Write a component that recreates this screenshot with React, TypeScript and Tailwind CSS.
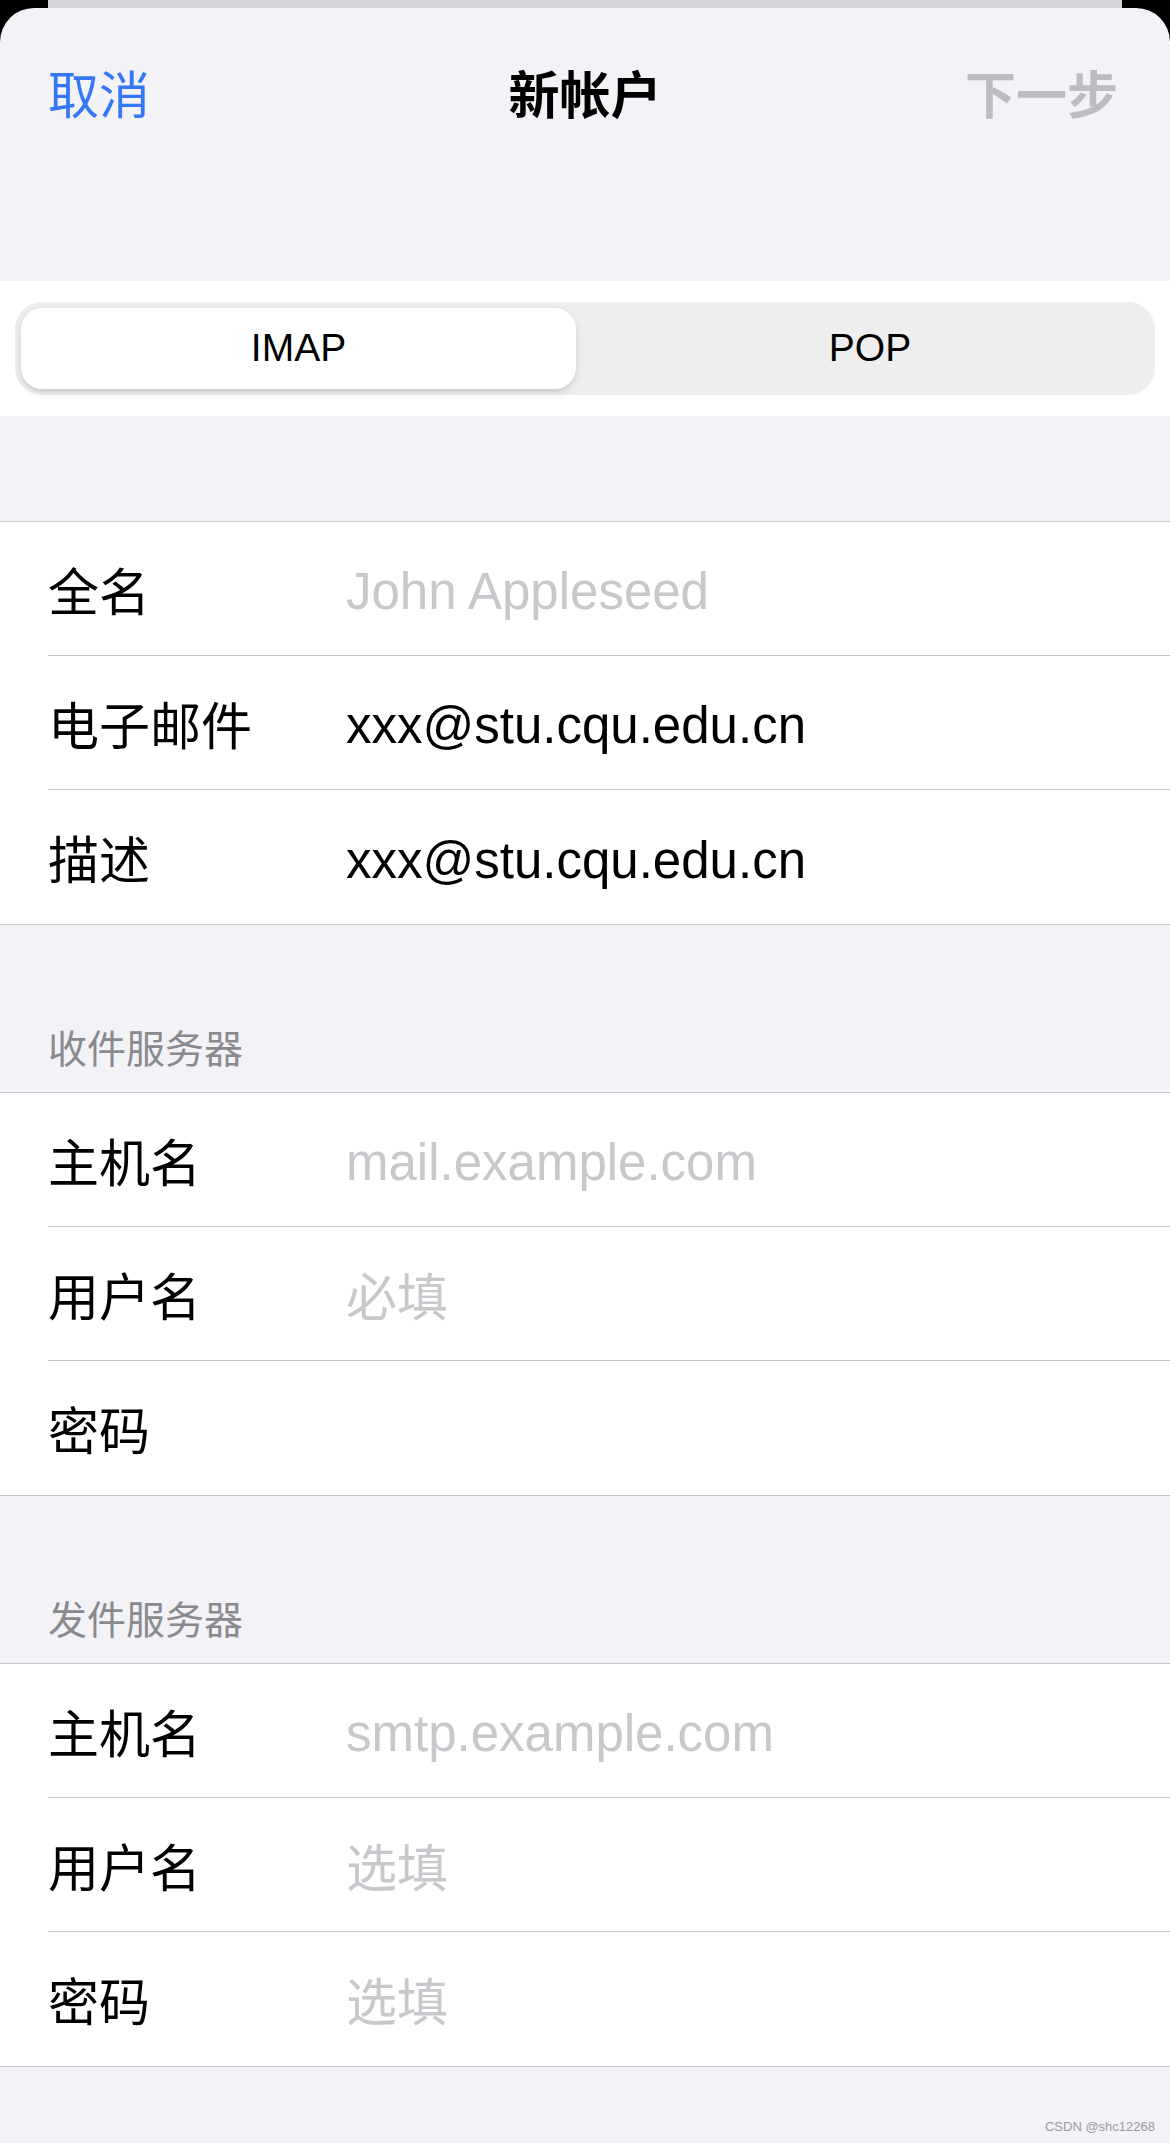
const cjk = "font-['Noto_Sans_CJK_SC',sans-serif]";
const latin = "font-['Liberation_Sans','Noto_Sans_CJK_SC',sans-serif]";

type Row = { label: string; value?: string; placeholder?: boolean; latinValue?: boolean };

const account: Row[] = [
  { label: '全名', value: 'John Appleseed', placeholder: true, latinValue: true },
  { label: '电子邮件', value: 'xxx@stu.cqu.edu.cn', latinValue: true },
  { label: '描述', value: 'xxx@stu.cqu.edu.cn', latinValue: true },
];

const incoming: Row[] = [
  { label: '主机名', value: 'mail.example.com', placeholder: true, latinValue: true },
  { label: '用户名', value: '必填', placeholder: true },
  { label: '密码' },
];

const outgoing: Row[] = [
  { label: '主机名', value: 'smtp.example.com', placeholder: true, latinValue: true },
  { label: '用户名', value: '选填', placeholder: true },
  { label: '密码', value: '选填', placeholder: true },
];

function Group({ rows }: { rows: Row[] }) {
  return (
    <div className="bg-white border-y border-[#c8c7cc]">
      {rows.map((row, i) => (
        <div key={i} className="pl-[48px]">
          <div className={`h-[134px] flex items-center ${i < rows.length - 1 ? 'border-b border-[#c8c7cc]' : ''}`}>
            <span className={`w-[298px] shrink-0 text-[51px] leading-[60px] text-black ${cjk}`}>{row.label}</span>
            {row.value && (
              <span
                className={`text-[51px] leading-[60px] ${row.latinValue ? `${latin} pt-[7px]` : cjk} ${
                  row.placeholder ? 'text-[#c7c7cc]' : 'text-black'
                }`}
              >
                {row.value}
              </span>
            )}
          </div>
        </div>
      ))}
    </div>
  );
}

function SectionHeader({ title }: { title: string }) {
  return (
    <div className="h-[167px] flex items-end pl-[48px] pb-[23px]">
      <span className={`text-[39px] leading-[46px] text-[#8a8a8e] ${cjk}`}>{title}</span>
    </div>
  );
}

export default function App() {
  return (
    <div className="w-[1170px] h-[2143px] bg-black flex flex-col overflow-hidden">
      {/* card peeking behind the sheet */}
      <div className="h-[8px] ml-[48px] mr-[48px] bg-[#d4d4d9] shrink-0" />

      <div className="flex-1 bg-[#f2f2f7] rounded-t-[34px] flex flex-col">
        {/* nav bar */}
        <div className="h-[168px] flex items-center justify-between px-[48px] relative">
          <span className={`text-[51px] leading-[60px] text-[#3478f6] ${cjk}`}>取消</span>
          <span className={`absolute left-1/2 -translate-x-1/2 text-[51px] leading-[60px] font-bold text-black ${cjk}`}>
            新帐户
          </span>
          <span className={`text-[51px] leading-[60px] font-bold text-[#bdbdc0] pr-[4px] ${cjk}`}>下一步</span>
        </div>
        <div className="h-[105px]" />

        {/* protocol picker */}
        <div className="bg-white h-[135px] px-[15px] pt-[21px]">
          <div className="h-[93px] rounded-[27px] bg-[#eeeeef] p-[6px] flex">
            <div className="w-[555px] h-full rounded-[21px] bg-white shadow-[0_3px_8px_rgba(0,0,0,0.12),0_3px_1px_rgba(0,0,0,0.04)] flex items-center justify-center">
              <span className={`text-[39px] font-medium text-black ${latin}`}>IMAP</span>
            </div>
            <div className="flex-1 pl-[15px] flex items-center justify-center">
              <span className={`text-[39px] font-medium text-black ${latin}`}>POP</span>
            </div>
          </div>
        </div>

        <div className="h-[105px]" />
        <Group rows={account} />

        <SectionHeader title="收件服务器" />
        <Group rows={incoming} />

        <SectionHeader title="发件服务器" />
        <Group rows={outgoing} />

        <div className="flex-1 flex items-end justify-end pr-[15px] pb-[9px]">
          <span className={`text-[13px] leading-[15px] text-[#9a9a9a] ${latin}`}>CSDN @shc12268</span>
        </div>
      </div>
    </div>
  );
}
